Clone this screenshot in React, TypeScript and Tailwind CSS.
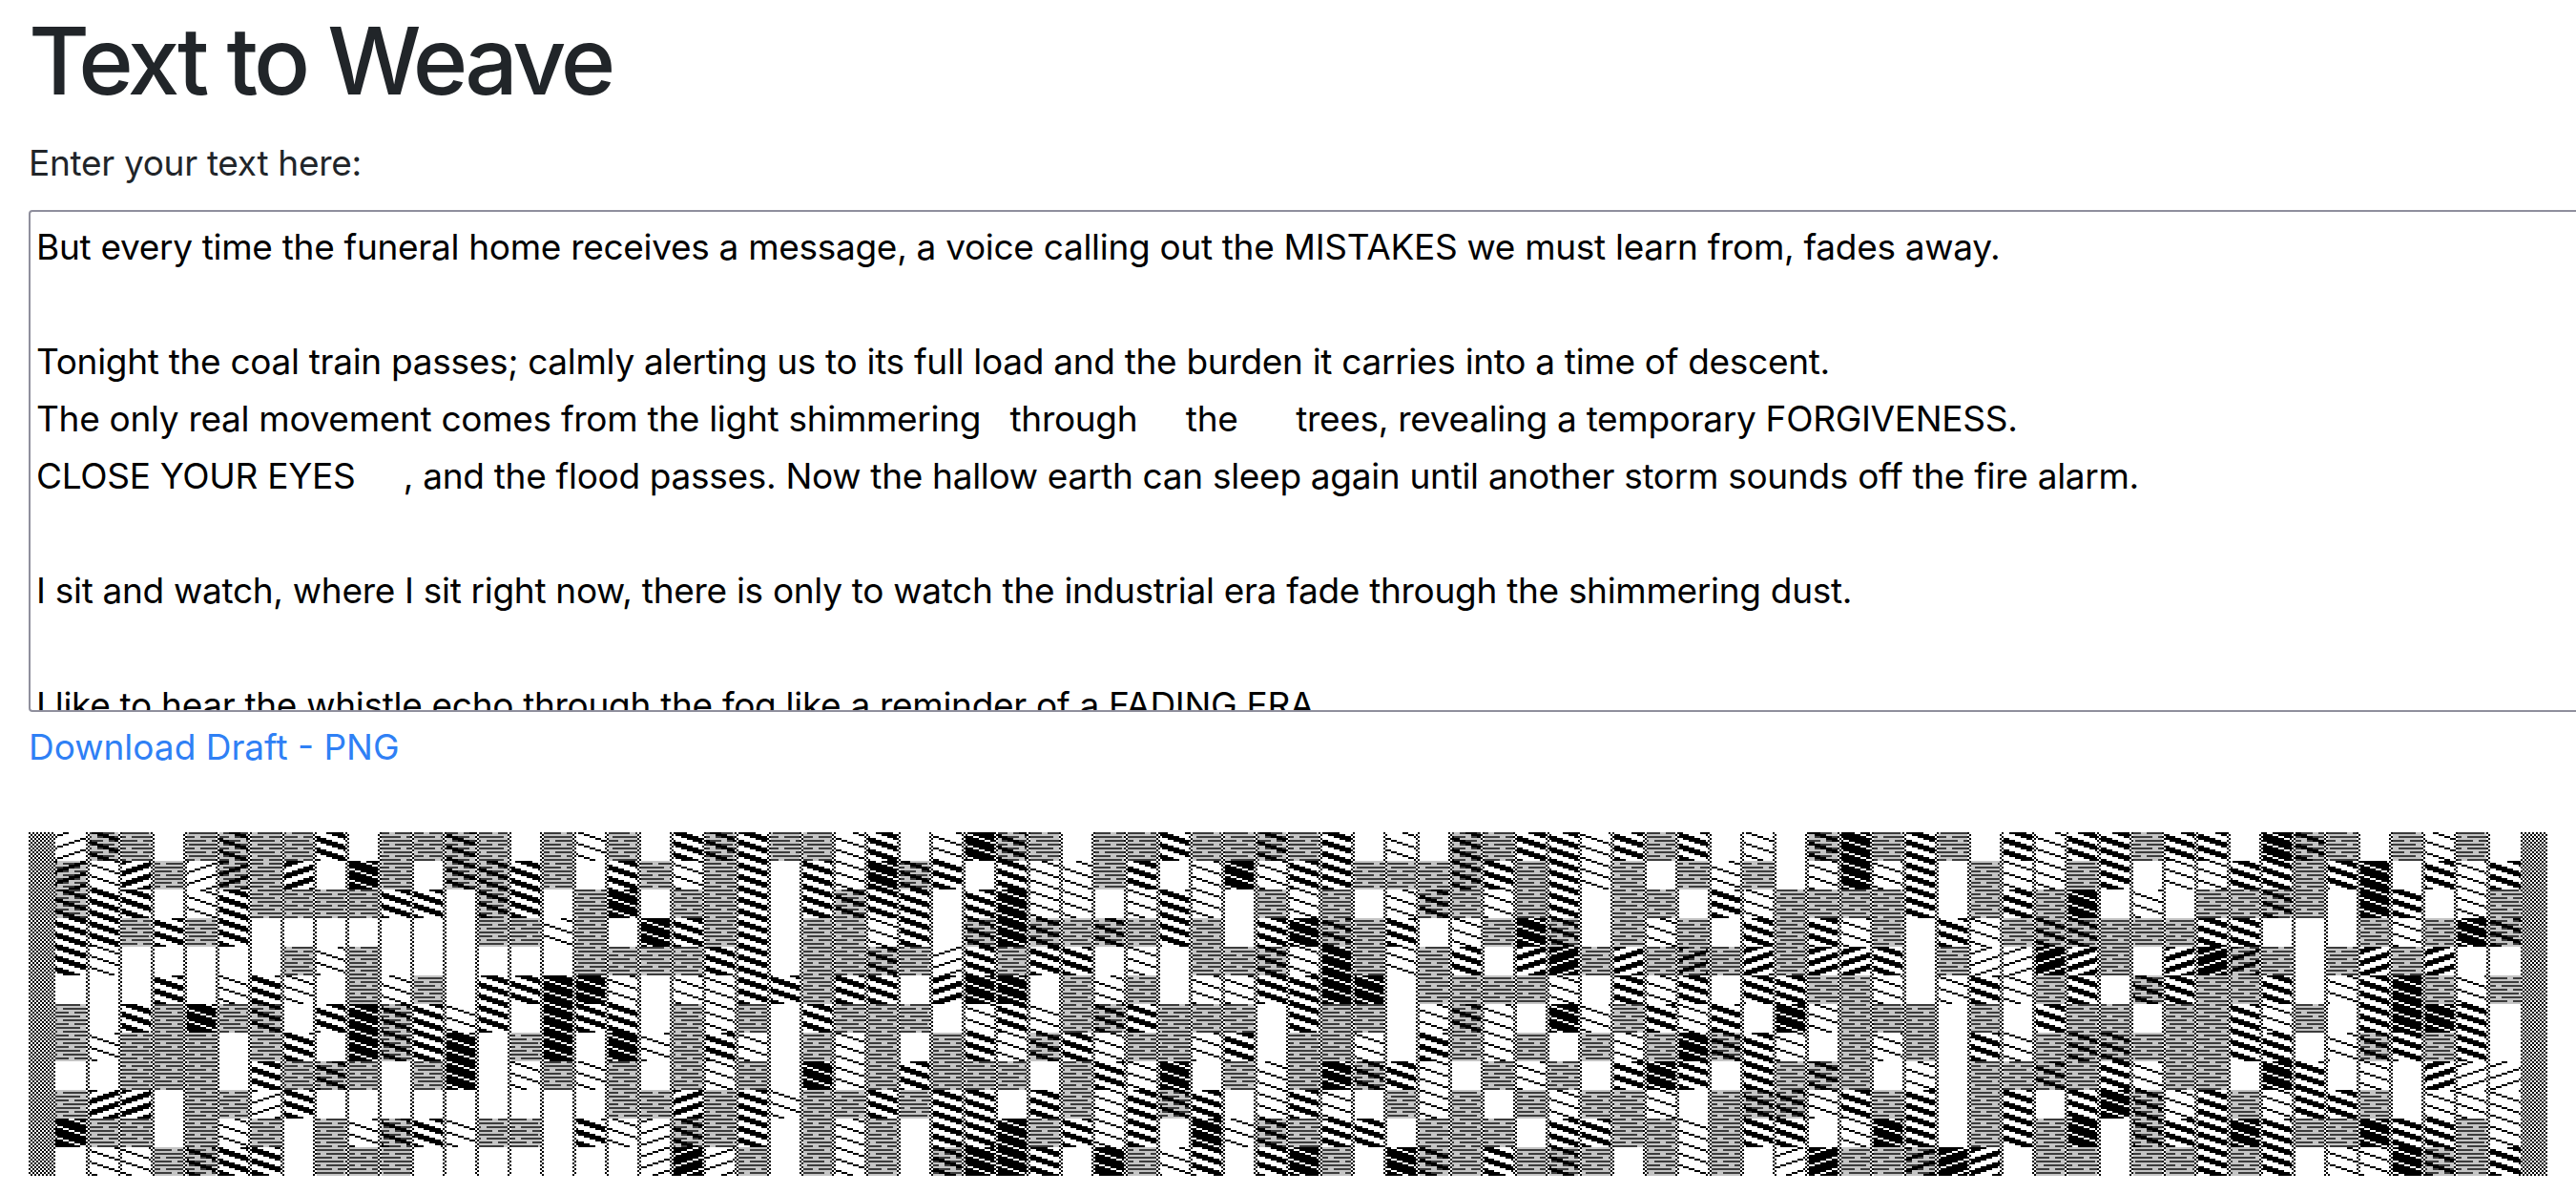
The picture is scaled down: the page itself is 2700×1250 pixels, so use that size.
const LINES = [
  'But every time the funeral home receives a message, a voice calling out the MISTAKES we must learn from, fades away.',
  '',
  'Tonight the coal train passes; calmly alerting us to its full load and the burden it carries into a time of descent.',
  'The only real movement comes from the light shimmering   through     the      trees, revealing a temporary FORGIVENESS.',
  'CLOSE YOUR EYES     , and the flood passes. Now the hallow earth can sleep again until another storm sounds off the fire alarm.',
  '',
  'I sit and watch, where I sit right now, there is only to watch the industrial era fade through the shimmering dust.',
  '',
  'I like to hear the whistle echo through the fog like a reminder of a FADING ERA.',
].join('\n');

// one letter per block: W white, L thin lines, M stripes, K near solid, G grey twill, D dark twill
// lower case runs the diagonal the other way
const ROWS = [
  'lDGWGDGGMWGGDGWGLGWMDMGGLMWLKDGWGGMGGDGMWLWDGMMLMGMWLWDKGMGWMLMMGMMWKDGWGLGW',
  'dLmgldgmWKGWDDMGWMGLGMWMLKDMWMLLGMWLKLMMGGgDMGMLGWGLGWLKLMWGLLGMWLLMMGMKWMLM',
  'DMMWLMGGGGMMWDMWGKWGGMWMDMMWMKLLWLMLWGLGWLDGLGMWGGWMLGGGGMWGMGKWLWGGDGWKMWLG',
  'MMGMGMWWWWWWWggLGWKMGMWGGLMWDKDGDGMGWMKDGMWLGKDWGLGWMGMLGWMLGDDGGGMMWWWGLGKD',
  'MLWWWWWGLGWWWWWWGGGGMMWGGDGlMGMMWLWGGDLKGLGMWmkgmgdgmgmmMWGllkmgWmkdgWgmgmWW',
  'WWWMWLMLWGLGWMMKKLWLLMMGMMWmKKWGLGWLLMMKKWGGGGLWMLMWMMGGLWLMLGMWDMGGMWLMKGLG',
  'GWMGKGDWMKDMLMWKMMWGLGWMGGGWLMLGDMGGgWMGGWLDLWKLGMLMWKLGGGWgWMGGWGGMLGWMKKMW',
  'GLGGGWGMWKDMKWGKWKLGMLWGLGWGMLDMLGGLMWGGLWMGLGWGLGKDMLWGLGWMLGDDGGGMMWLDMGMW',
  'WWGGGWMGDGWGKWLGLGWGLGWKLGMGGGWGMLKWGLGKDMLWGLGWMKMWMGDGWLWGGDGMLGGWKMWLWmll',
  'gmmWGglMWWWWWWWWWGGmGMLGGMGMMWMGLMDMWLMLWGLGWGLGGLWGDDLMGMWGMWMKDLMGLMMGWLLL',
  'KGGWGLGWGLDMLGGWMLlDGMWGLGWMMKGMLMWKLDGMMWGGGWMMGGLGMMWLKMWGMGKWDMMKMGGKMMGL',
  'WLLGDMMWGGGWWWWWWWlklgWGLGWDKKMWKGLMWMKGWKDGMGDGWGLGWlkggdkmWGGWGGMGMWLLKDGM',
];

type Pixel = (j: number, phase: number) => boolean;

const band: Pixel = (j, p) => j % 2 === 0 && p !== 3;
const LINE_SHAPES: Record<string, Pixel> = {
  L: (_j, p) => p === 0,
  M: (_j, p) => p <= 2,
  K: (_j, p) => p <= 4,
  G: () => false,
  D: (_j, p) => p <= 1,
};

function cells(shape: Pixel, up: boolean) {
  const out: string[] = [];
  for (let j = 0; j < 6; j++) {
    for (let i = 0; i < 18; i++) {
      const step = Math.floor(i / 3);
      const phase = ((up ? j + step : j - step) % 6 + 6) % 6;
      if (shape(j, phase)) out.push(`M${i} ${j}h1v1h-1z`);
    }
  }
  return out.join('');
}

function twillPattern(id: string, shape: Pixel, up: boolean) {
  const grey = id.toLowerCase() === 'g' || id.toLowerCase() === 'd';
  return (
    <pattern id={id} width={18} height={6} patternUnits="userSpaceOnUse">
      {grey && <path d={cells(() => true, up)} fill="#c4c4c4" />}
      {grey && <path d={cells(band, up)} fill="#3c3c3c" />}
      <path d={cells(shape, up)} />
    </pattern>
  );
}

function Weave() {
  const cols = ROWS[0].length;
  return (
    <svg className="block blur-[0.6px]" width={2640} height={360} viewBox="0 0 1320 180" shapeRendering="crispEdges">
      <defs>
        {Object.keys(LINE_SHAPES).map((key) => (
          <g key={key}>
            {twillPattern(key, LINE_SHAPES[key], false)}
            {twillPattern(key.toLowerCase(), LINE_SHAPES[key], true)}
          </g>
        ))}
        <pattern id="check" width={2} height={2} patternUnits="userSpaceOnUse">
          <path d="M0 0h1v1h-1zM1 1h1v1h-1z" />
        </pattern>
      </defs>
      <rect width={14} height={180} fill="url(#check)" />
      <rect x={1306} width={14} height={180} fill="url(#check)" />
      {ROWS.map((row, r) =>
        row.split('').map((c, k) =>
          c === 'W' ? null : <rect key={`${r}-${k}`} x={14 + k * 17} y={r * 15} width={17} height={15} fill={`url(#${c})`} />
        )
      )}
      {Array.from({ length: cols - 1 }, (_, k) => (
        <g key={k}>
          <rect x={30 + k * 17} width={2} height={180} fill="#fff" />
          <rect x={30 + k * 17} width={2} height={180} fill="url(#check)" />
        </g>
      ))}
    </svg>
  );
}

export default function App() {
  return (
    <div className="h-[1250px] overflow-hidden bg-white pl-[30px] font-['Inter',sans-serif]">
      <h1 className="mt-[4px] h-[137px] text-[98px] leading-[120px] font-medium tracking-[-4px] text-[#212529]">Text to Weave</h1>
      <label className="block h-[79px] text-[37px] leading-[60px] tracking-[-0.3px] text-[#212529]">Enter your text here:</label>
      <textarea
        readOnly
        defaultValue={LINES}
        className="block h-[526px] w-[2800px] resize-none overflow-hidden rounded-[4px] border-2 border-[#8f8f9d] px-[6px] py-[7px] text-[37px] leading-[60px] tracking-[-0.3px] text-black outline-none"
      />
      <a href="#" className="mt-[7px] block h-[60px] text-[37px] leading-[60px] text-[#2f80f5]">Download Draft - PNG</a>
      <div className="mt-[59px]">
        <Weave />
      </div>
    </div>
  );
}
